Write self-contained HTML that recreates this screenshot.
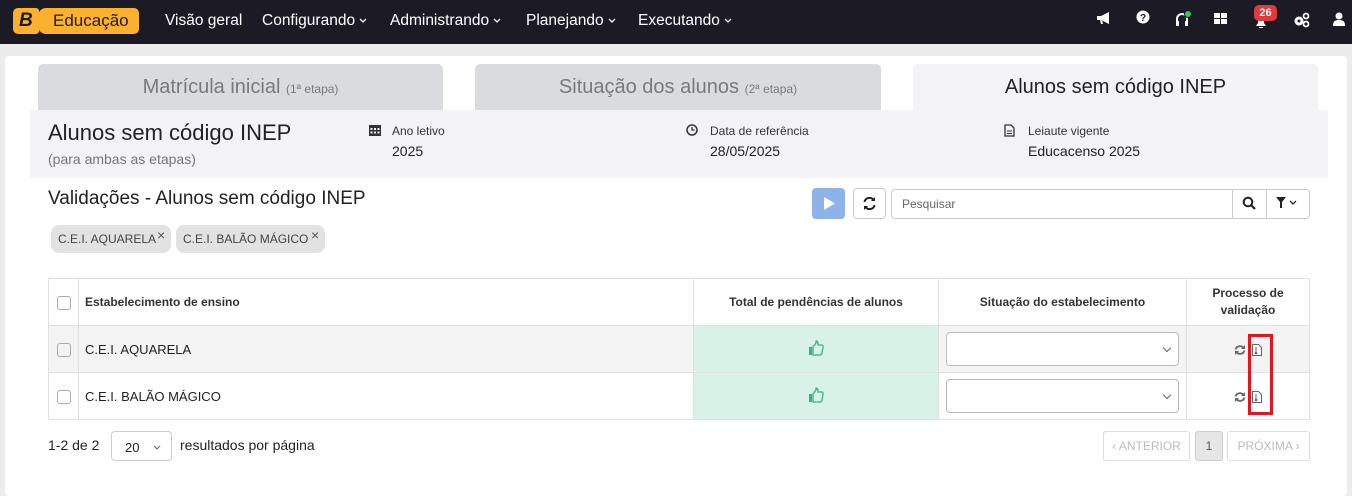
<!DOCTYPE html>
<html><head><meta charset="utf-8"><style>
*{box-sizing:border-box;margin:0;padding:0}
body{width:1352px;height:491px;background:#ececec;font-family:"Liberation Sans",sans-serif;color:#222;position:relative;overflow:hidden}
.nav{position:absolute;left:0;top:0;width:1352px;height:44px;background:#1c1b25;color:#fff}
.logo{position:absolute;left:13px;top:8px;height:26px;width:126px}
.logo .a{position:absolute;left:0;top:0;width:26px;height:26px;background:#fbb12d;border-radius:5px 3px 3px 5px}
.logo .c{position:absolute;left:25px;top:0;width:101px;height:26px;background:#fbb12d;border-radius:8px 5px 5px 8px}
.logo b{position:absolute;left:6px;top:2px;font-size:19px;font-style:italic;color:#1c1b25}
.logo .sep{position:absolute;left:24px;top:0;width:4px;height:26px;background:#1c1b25;border-radius:0 6px 6px 0;opacity:.35}
.logo span{position:absolute;left:40px;top:3px;font-size:17px;color:#1c1b25}
.menu{position:absolute;top:12px;font-size:15.5px;color:#fff}
.menu svg{margin-left:4px;vertical-align:2px}
.ic{position:absolute;top:12px}
.card{position:absolute;left:5px;top:56px;width:1342px;height:440px;background:#fff;border-radius:4px}
.tab{position:absolute;top:64px;height:46px;background:#dadbdf;border-radius:5px 5px 0 0;text-align:center;font-size:20px;color:#7a7a7a;line-height:46px}
.tab small{font-size:12px}
.band{position:absolute;left:30px;top:110px;width:1298px;height:68px;background:#f3f3f5}
.lbl{position:absolute;font-size:12px;color:#333}
.val{position:absolute;font-size:14px;color:#222}
.chip{position:absolute;top:225px;height:28px;background:#e2e2e2;border-radius:8px;font-size:12px;color:#444;line-height:28px;padding-left:7px}
.chip i{position:absolute;top:-4px;font-style:normal;font-size:14px;color:#555}
table{position:absolute;left:48px;top:278px;width:1262px;border-collapse:collapse;font-size:13px}
td,th{border:1px solid #e0e0e0;height:47px;padding:0}
th{font-weight:bold;font-size:12px;color:#333}
.cb{display:inline-block;width:14px;height:14px;border:1.5px solid #aaa;border-radius:3px;vertical-align:middle}
.sel{width:233px;height:34px;border:1px solid #bbb;border-radius:4px;margin:0 auto;position:relative;background:#fff}
.sel:after{content:"";position:absolute;right:8px;top:12px;width:5px;height:5px;border-right:1.3px solid #666;border-bottom:1.3px solid #666;transform:rotate(45deg)}
.pg{position:absolute;top:431px;height:30px;border:1px solid #ddd;border-radius:3px;font-size:12px;color:#bbb;line-height:28px;text-align:center}
</style></head><body>
<div class="nav">
 <div class="logo"><div class="a"></div><div class="c"></div><b>B</b><span>Educação</span></div>
 <div class="menu" style="left:165px">Visão geral</div>
 <div class="menu" style="left:262px">Configurando<svg width="8" height="5"><path d="M1 1l3 3 3-3" stroke="#fff" fill="none" stroke-width="1.3"/></svg></div>
 <div class="menu" style="left:390px">Administrando<svg width="8" height="5"><path d="M1 1l3 3 3-3" stroke="#fff" fill="none" stroke-width="1.3"/></svg></div>
 <div class="menu" style="left:526px">Planejando<svg width="8" height="5"><path d="M1 1l3 3 3-3" stroke="#fff" fill="none" stroke-width="1.3"/></svg></div>
 <div class="menu" style="left:638px">Executando<svg width="8" height="5"><path d="M1 1l3 3 3-3" stroke="#fff" fill="none" stroke-width="1.3"/></svg></div>
 <svg class="ic" style="left:1096px;top:11px" width="16" height="14" viewBox="0 0 16 14"><path d="M1 5h4l8-4v12l-8-4H1zM4 9l1 4h2l-1-4" fill="#fff"/></svg>
 <svg class="ic" style="left:1136px;top:10px" width="14" height="14"><circle cx="7" cy="7" r="6.5" fill="#fff"/><text x="7" y="11" font-size="10" font-weight="bold" text-anchor="middle" fill="#1c1b25" font-family="Liberation Sans">?</text></svg>
 <svg class="ic" style="left:1174px;top:10px" width="20" height="20"><path d="M3 12V9a5 5 0 0 1 10 0v3" stroke="#fff" stroke-width="2" fill="none"/><rect x="2" y="11" width="3" height="5" fill="#fff"/><rect x="11" y="11" width="3" height="5" fill="#fff"/><circle cx="14" cy="4" r="3.5" fill="#2ecc52" stroke="#1c1b25"/></svg>
 <svg class="ic" style="left:1214px;top:13px" width="14" height="12"><rect x="0" y="0" width="6" height="5" fill="#fff"/><rect x="7" y="0" width="6" height="5" fill="#fff"/><rect x="0" y="6" width="6" height="5" fill="#fff"/><rect x="7" y="6" width="6" height="5" fill="#fff"/></svg>
 <svg class="ic" style="left:1254px;top:16px" width="14" height="12"><path d="M2 10h10l-2-3V4a3 3 0 0 0-6 0v3zM5 11h4v1H5z" fill="#fff"/></svg>
 <div style="position:absolute;left:1254px;top:5px;width:23px;height:16px;background:#e0393e;border-radius:5px;color:#fff;font-size:11px;font-weight:bold;text-align:center;line-height:16px">26</div>
 <svg class="ic" style="left:1293px;top:12px" width="18" height="16"><circle cx="6" cy="9" r="4.5" fill="#fff"/><circle cx="6" cy="9" r="1.5" fill="#1c1b25"/><circle cx="13" cy="4" r="2.5" fill="none" stroke="#fff" stroke-width="1.8"/><circle cx="13" cy="12" r="2.5" fill="none" stroke="#fff" stroke-width="1.8"/></svg>
 <svg class="ic" style="left:1333px;top:12px" width="12" height="14"><circle cx="6" cy="4" r="3.5" fill="#fff"/><path d="M0 14c0-5 2-6 6-6s6 1 6 6z" fill="#fff"/></svg>
</div>
<div class="card"></div>
<div class="tab" style="left:38px;width:405px">Matrícula inicial <small>(1ª etapa)</small></div>
<div class="tab" style="left:475px;width:406px">Situação dos alunos <small>(2ª etapa)</small></div>
<div class="tab" style="left:913px;width:405px;background:#f3f3f5;color:#222">Alunos sem código INEP</div>
<div class="band"></div>
<div style="position:absolute;left:48px;top:120px;font-size:22px;color:#222">Alunos sem código INEP</div>
<div style="position:absolute;left:48px;top:151px;font-size:14px;color:#777">(para ambas as etapas)</div>
<svg style="position:absolute;left:369px;top:124px" width="12" height="12"><rect x="0" y="1" width="12" height="11" fill="#333"/><g fill="#f3f3f5"><rect x="1.5" y="4" width="2" height="2"/><rect x="5" y="4" width="2" height="2"/><rect x="8.5" y="4" width="2" height="2"/><rect x="1.5" y="7.5" width="2" height="2"/><rect x="5" y="7.5" width="2" height="2"/><rect x="8.5" y="7.5" width="2" height="2"/></g></svg>
<div class="lbl" style="left:392px;top:124px">Ano letivo</div><div class="val" style="left:392px;top:143px">2025</div>
<svg style="position:absolute;left:686px;top:124px" width="12" height="12"><circle cx="6" cy="6" r="5" fill="none" stroke="#333" stroke-width="1.5"/><path d="M6 3v3h2.5" stroke="#333" stroke-width="1.3" fill="none"/></svg>
<div class="lbl" style="left:710px;top:124px">Data de referência</div><div class="val" style="left:710px;top:143px">28/05/2025</div>
<svg style="position:absolute;left:1004px;top:124px" width="11" height="13"><path d="M1 1h6l3 3v8H1z" fill="none" stroke="#333" stroke-width="1.3"/><path d="M3 7h5M3 9.5h5" stroke="#333"/></svg>
<div class="lbl" style="left:1028px;top:124px">Leiaute vigente</div><div class="val" style="left:1028px;top:143px">Educacenso 2025</div>
<div style="position:absolute;left:48px;top:188px;font-size:19px;color:#222">Validações - Alunos sem código INEP</div>
<div class="chip" style="left:51px;width:120px">C.E.I. AQUARELA<i style="left:106px">×</i></div>
<div class="chip" style="left:176px;width:149px">C.E.I. BALÃO MÁGICO<i style="left:135px">×</i></div>
<div style="position:absolute;left:812px;top:188px;width:33px;height:31px;background:#8eb3ea;border-radius:4px"><svg width="33" height="31"><path d="M12 9l11 6.5L12 22z" fill="#fff"/></svg></div>
<div style="position:absolute;left:853px;top:188px;width:33px;height:31px;border:1px solid #ccc;border-radius:4px"><svg width="31" height="29"><path d="M10.5 13a5 5 0 0 1 9-2M20.5 16a5 5 0 0 1-9 2" stroke="#222" stroke-width="2" fill="none"/><path d="M21 8v4h-4zM10 21v-4h4z" fill="#222"/></svg></div>
<div style="position:absolute;left:891px;top:189px;width:419px;height:30px;border:1px solid #ccc;border-radius:4px;font-size:12px;color:#666;line-height:28px;padding-left:10px">Pesquisar</div>
<div style="position:absolute;left:1232px;top:189px;width:1px;height:30px;background:#ccc"></div>
<div style="position:absolute;left:1266px;top:189px;width:1px;height:30px;background:#ccc"></div>
<svg style="position:absolute;left:1242px;top:196px" width="14" height="14"><circle cx="6" cy="6" r="4.3" fill="none" stroke="#222" stroke-width="2"/><path d="M9 9l4 4" stroke="#222" stroke-width="2.2"/></svg>
<svg style="position:absolute;left:1276px;top:197px" width="24" height="12"><path d="M0 0h10L6 5v6L4 11V5z" fill="#222"/><path d="M14 4l3 3 3-3" stroke="#222" fill="none" stroke-width="1.3"/></svg>
<table>
<tr style="background:#fff"><td style="width:30px;text-align:center"><span class="cb"></span></td><th style="text-align:left;padding-left:6px;width:615px">Estabelecimento de ensino</th><th style="width:245px">Total de pendências de alunos</th><th style="width:248px">Situação do estabelecimento</th><th style="line-height:17px">Processo de<br>validação</th></tr>
<tr style="background:#f3f3f3"><td style="text-align:center"><span class="cb"></span></td><td style="padding-left:6px">C.E.I. AQUARELA</td><td style="background:#d8f2e8;text-align:center"><svg width="16" height="16" viewBox="0 0 16 16"><path d="M1 7h3v8H1z" fill="#3cb37a"/><path d="M5 7l3-4V1c2 0 2 2 2 4h4c1 0 1 1 1 2l-1 6c0 1-1 2-2 2H5z" fill="none" stroke="#3cb37a" stroke-width="1.3"/></svg></td><td><div class="sel"></div></td><td style="text-align:center"><svg width="12" height="12" style="vertical-align:middle;margin-right:6px"><path d="M1.5 5.5a4.5 4.5 0 0 1 8-1.5M10.5 6.5a4.5 4.5 0 0 1-8 1.5" stroke="#666" stroke-width="1.8" fill="none"/><path d="M11 1v4H7zM1 11V7h4z" fill="#666"/></svg><svg width="10" height="12" style="vertical-align:middle"><path d="M.5.5h6l3 3v8H.5z" fill="#fff" stroke="#666"/><path d="M4 3v5" stroke="#666"/><circle cx="4" cy="9" r="1.3" fill="#666"/></svg></td></tr>
<tr style="background:#fff"><td style="text-align:center"><span class="cb"></span></td><td style="padding-left:6px">C.E.I. BALÃO MÁGICO</td><td style="background:#d8f2e8;text-align:center"><svg width="16" height="16" viewBox="0 0 16 16"><path d="M1 7h3v8H1z" fill="#3cb37a"/><path d="M5 7l3-4V1c2 0 2 2 2 4h4c1 0 1 1 1 2l-1 6c0 1-1 2-2 2H5z" fill="none" stroke="#3cb37a" stroke-width="1.3"/></svg></td><td><div class="sel"></div></td><td style="text-align:center"><svg width="12" height="12" style="vertical-align:middle;margin-right:6px"><path d="M1.5 5.5a4.5 4.5 0 0 1 8-1.5M10.5 6.5a4.5 4.5 0 0 1-8 1.5" stroke="#666" stroke-width="1.8" fill="none"/><path d="M11 1v4H7zM1 11V7h4z" fill="#666"/></svg><svg width="10" height="12" style="vertical-align:middle"><path d="M.5.5h6l3 3v8H.5z" fill="#fff" stroke="#666"/><path d="M4 3v5" stroke="#666"/><circle cx="4" cy="9" r="1.3" fill="#666"/></svg></td></tr>
</table>
<div style="position:absolute;left:1248px;top:334px;width:25px;height:81px;border:3px solid #e8141c"></div>
<div style="position:absolute;left:48px;top:437px;font-size:14px">1-2 de 2</div>
<div style="position:absolute;left:111px;top:431px;width:61px;height:30px;border:1px solid #ccc;border-radius:4px;font-size:13px;padding:8px 0 0 13px">20 <svg width="8" height="5" style="margin-left:10px;vertical-align:2px"><path d="M1 1l3 3 3-3" stroke="#666" fill="none"/></svg></div>
<div style="position:absolute;left:180px;top:437px;font-size:14px">resultados por página</div>
<div class="pg" style="left:1103px;width:87px">&#8249; ANTERIOR</div>
<div class="pg" style="left:1195px;width:28px;background:#e6e6e6;color:#555;border-color:#ccc">1</div>
<div class="pg" style="left:1227px;width:83px">PRÓXIMA &#8250;</div>
</body></html>
